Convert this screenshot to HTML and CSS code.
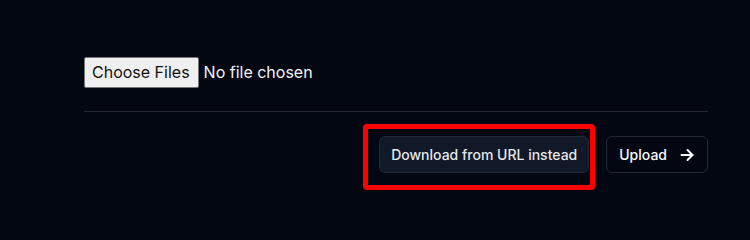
FILE: index.html
```html
<!DOCTYPE html>
<html lang="en">
<head>
<meta charset="utf-8">
<title>Upload</title>
<link rel="stylesheet" href="styles.css">
</head>
<body>
<main class="page">
  <form class="upload-form">
    <div class="file-row">
      <input class="file-input" type="file" multiple>
    </div>
    <hr class="divider">
    <div class="actions">
      <div class="highlight-wrap">
        <button type="button" class="btn btn-secondary">Download from URL instead</button>
        <span class="highlight" aria-hidden="true"></span>
      </div>
      <button type="submit" class="btn btn-outline">
        <span>Upload</span>
        <svg class="arrow" width="16" height="16" viewBox="0 0 16 16" fill="none" stroke="currentColor" stroke-width="2" stroke-linecap="round" stroke-linejoin="round" aria-hidden="true">
          <path d="M2.5 8h11"/>
          <path d="M8.5 3l5 5-5 5"/>
        </svg>
      </button>
    </div>
  </form>
</main>
</body>
</html>
```
FILE: styles.css
```css
* { box-sizing: border-box; }

html, body {
  margin: 0;
  padding: 0;
  background: #030712;
}

body {
  font-family: Inter, "Noto Sans", sans-serif;
  color: #f9fafb;
  height: 208px;
  overflow: hidden;
}

.page {
  padding: 57px 42px 0 84px;
}

.upload-form {
  display: flex;
  flex-direction: column;
}

.file-row {
  display: flex;
  align-items: center;
  height: 30px;
}

.file-input {
  font-family: Inter, "Noto Sans", sans-serif;
  font-size: 16px;
  line-height: 19px;
  color: #f3f4f6;
  background: transparent;
  border: 0;
  padding: 0;
}

.file-input::file-selector-button {
  font-family: Inter, "Noto Sans", sans-serif;
  font-size: 16px;
  line-height: 19px;
  color: #111111;
  background: #efefef;
  border: 1px solid #767676;
  border-radius: 2px;
  padding: 5px 8px 5px 7px;
  margin-right: 5px;
}

.divider {
  margin: 24px 0 24px;
  border: 0;
  border-top: 1px solid #1f2937;
  height: 0;
}

.actions {
  display: flex;
  justify-content: flex-end;
  align-items: center;
  gap: 17px;
}

.btn {
  display: inline-flex;
  align-items: center;
  height: 37px;
  padding: 0 11px;
  font-family: Inter, "Noto Sans", sans-serif;
  font-size: 14px;
  font-weight: 500;
  border-radius: 6px;
  border: 1px solid #1f2937;
  cursor: pointer;
}

.btn-secondary {
  background: #111827;
  color: #e5e7eb;
}

.btn-outline {
  background: #030712;
  color: #f9fafb;
  padding: 0 12px;
  gap: 12px;
}

.arrow {
  display: block;
}

.highlight-wrap {
  position: relative;
  display: flex;
}

.highlight {
  position: absolute;
  left: -16px;
  top: -12px;
  right: -6px;
  bottom: -17px;
  border: 5px solid #ff0000;
  border-radius: 4px;
  pointer-events: none;
}
```
